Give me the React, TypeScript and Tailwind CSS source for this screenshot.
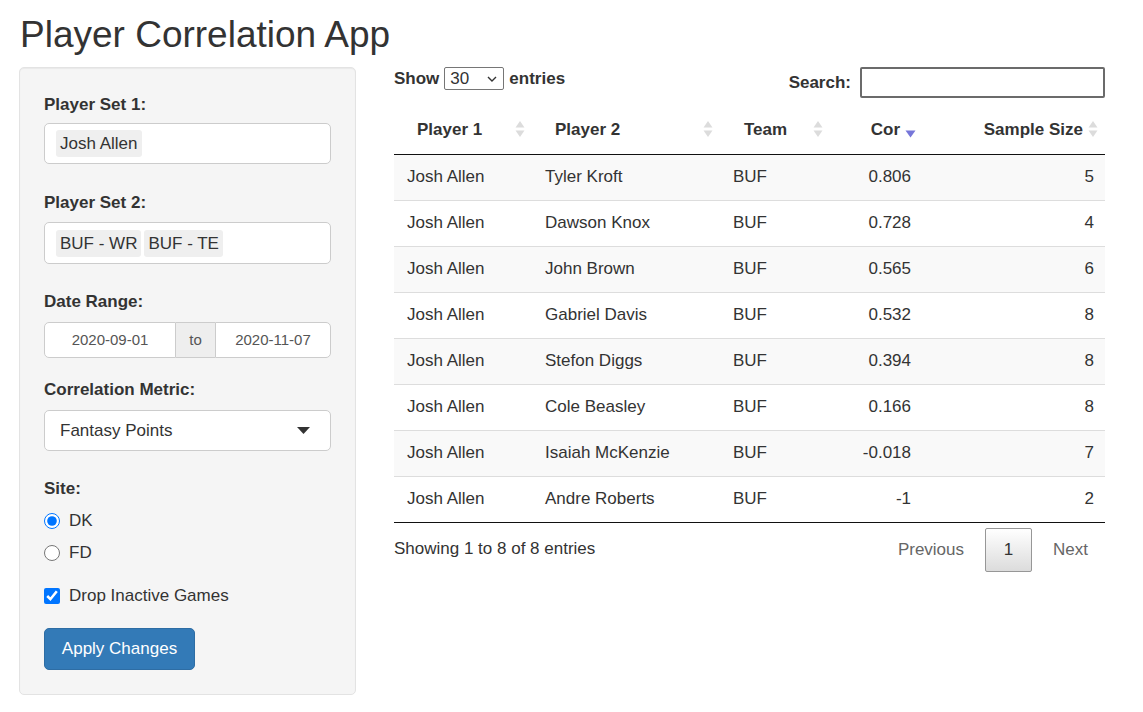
import React from 'react'

const rows = [
  { p1: 'Josh Allen', p2: 'Tyler Kroft', team: 'BUF', cor: '0.806', n: 5 },
  { p1: 'Josh Allen', p2: 'Dawson Knox', team: 'BUF', cor: '0.728', n: 4 },
  { p1: 'Josh Allen', p2: 'John Brown', team: 'BUF', cor: '0.565', n: 6 },
  { p1: 'Josh Allen', p2: 'Gabriel Davis', team: 'BUF', cor: '0.532', n: 8 },
  { p1: 'Josh Allen', p2: 'Stefon Diggs', team: 'BUF', cor: '0.394', n: 8 },
  { p1: 'Josh Allen', p2: 'Cole Beasley', team: 'BUF', cor: '0.166', n: 8 },
  { p1: 'Josh Allen', p2: 'Isaiah McKenzie', team: 'BUF', cor: '-0.018', n: 7 },
  { p1: 'Josh Allen', p2: 'Andre Roberts', team: 'BUF', cor: '-1', n: 2 },
]

function SortBoth() {
  return (
    <svg className="absolute right-[7px] top-1/2 -translate-y-1/2" width="10" height="18" viewBox="0 0 10 18">
      <path d="M5 1 L9.5 7.5 L0.5 7.5 Z" fill="#dcdcdc" />
      <path d="M5 17 L9.5 10.5 L0.5 10.5 Z" fill="#dcdcdc" />
    </svg>
  )
}

function SortDesc() {
  return (
    <svg className="absolute right-[7px] top-[25px]" width="11" height="8" viewBox="0 0 11 8">
      <path d="M5.5 7.5 L10.5 0.5 L0.5 0.5 Z" fill="#7676d9" />
    </svg>
  )
}

function Label({ children }: { children: React.ReactNode }) {
  return <div className="h-[24px] leading-[24px] font-bold text-[17px] text-[#333]">{children}</div>
}

function Chip({ children }: { children: React.ReactNode }) {
  return <span className="bg-[#efefef] rounded-[3px] px-[4px] h-[27px] leading-[27px] inline-block">{children}</span>
}

export default function App() {
  return (
    <div className="w-[1143px] h-[712px] bg-white text-[#333] text-[17px] font-['Liberation_Sans',Arial,sans-serif] px-[19px]">
      <h2 className="pt-[14px] h-[67px] text-[37px] leading-[41px] font-normal pl-[1px]">Player Correlation App</h2>

      <div className="flex">
        {/* Sidebar */}
        <div className="w-[337px] h-[628px] bg-[#f5f5f5] border border-[#e3e3e3] rounded-[5px] shadow-[inset_0_1px_1px_rgba(0,0,0,0.05)] px-[24px] pt-[25px]">
          <Label>Player Set 1:</Label>
          <div className="mt-[6px] h-[41px] bg-white border border-[#ccc] rounded-[5px] flex items-center pl-[11px]">
            <Chip>Josh Allen</Chip>
          </div>

          <div className="mt-[27px]">
            <Label>Player Set 2:</Label>
          </div>
          <div className="mt-[7px] h-[42px] bg-white border border-[#ccc] rounded-[5px] flex items-center gap-[3px] pl-[11px]">
            <Chip>BUF - WR</Chip>
            <Chip>BUF - TE</Chip>
          </div>

          <div className="mt-[26px]">
            <Label>Date Range:</Label>
          </div>
          <div className="mt-[8px] h-[36px] flex text-[15px] text-[#555]">
            <div className="w-[132px] bg-white border border-[#ccc] rounded-l-[5px] flex items-center justify-center">2020-09-01</div>
            <div className="w-[39px] bg-[#eee] border-y border-[#ccc] flex items-center justify-center">to</div>
            <div className="w-[116px] bg-white border border-[#ccc] rounded-r-[5px] flex items-center justify-center">2020-11-07</div>
          </div>

          <div className="mt-[20px]">
            <Label>Correlation Metric:</Label>
          </div>
          <div className="mt-[8px] h-[41px] bg-white border border-[#ccc] rounded-[5px] flex items-center justify-between pl-[15px] pr-[20px]">
            <span>Fantasy Points</span>
            <svg width="13" height="7" viewBox="0 0 13 7">
              <path d="M0 0 L13 0 L6.5 7 Z" fill="#333" />
            </svg>
          </div>

          <div className="mt-[26px]">
            <Label>Site:</Label>
          </div>
          <div className="mt-[8px] flex flex-col gap-[8px]">
            <label className="h-[24px] flex items-center gap-[9px]">
              <input type="radio" name="site" defaultChecked className="w-4 h-4 m-0 accent-[#0075ff]" />
              <span>DK</span>
            </label>
            <label className="h-[24px] flex items-center gap-[9px]">
              <input type="radio" name="site" className="w-4 h-4 m-0" />
              <span>FD</span>
            </label>
          </div>

          <label className="mt-[19px] h-[24px] flex items-center gap-[9px]">
            <input type="checkbox" defaultChecked className="w-4 h-4 m-0 accent-[#0075ff]" />
            <span>Drop Inactive Games</span>
          </label>

          <button className="mt-[20px] w-[151px] h-[42px] bg-[#337ab7] border border-[#2e6da4] rounded-[5px] text-white text-[17px]">
            Apply Changes
          </button>
        </div>

        {/* Main */}
        <div className="ml-[38px] w-[711px]">
          <div className="flex justify-between items-start">
            <div className="flex items-center h-[23px] font-bold">
              <span>Show</span>
              <div className="ml-[5px] w-[60px] h-[23px] border border-[#767676] rounded-[2px] flex items-center justify-between pl-[5px] pr-[6px] font-normal">
                <span>30</span>
                <svg width="10" height="6" viewBox="0 0 10 6">
                  <path d="M1 1 L5 5 L9 1" fill="none" stroke="#333" strokeWidth="1.4" />
                </svg>
              </div>
              <span className="ml-[5px]">entries</span>
            </div>
            <div className="flex items-center font-bold">
              <span>Search:</span>
              <div className="ml-[9px] w-[245px] h-[31px] border-2 border-[#6b6b6b] rounded-[2px] bg-white" />
            </div>
          </div>

          <table className="mt-[7px] w-[711px] table-fixed border-collapse">
            <colgroup>
              <col className="w-[138px]" />
              <col className="w-[188px]" />
              <col className="w-[110px]" />
              <col className="w-[93px]" />
              <col className="w-[182px]" />
            </colgroup>
            <thead>
              <tr className="border-b border-[#111]">
                <th className="relative h-[49px] pl-[23px] text-left font-bold p-0">Player 1<SortBoth /></th>
                <th className="relative h-[49px] pl-[23px] text-left font-bold p-0">Player 2<SortBoth /></th>
                <th className="relative h-[49px] pl-[24px] text-left font-bold p-0">Team<SortBoth /></th>
                <th className="relative h-[49px] pr-[23px] text-right font-bold p-0">Cor<SortDesc /></th>
                <th className="relative h-[49px] pr-[22px] text-right font-bold p-0">Sample Size<SortBoth /></th>
              </tr>
            </thead>
            <tbody>
              {rows.map((r, i) => (
                <tr
                  key={r.p2}
                  className={`${i % 2 === 0 ? 'bg-[#f9f9f9]' : 'bg-white'} ${i === rows.length - 1 ? 'border-b border-[#111]' : 'border-b border-[#ddd]'}`}
                >
                  <td className="h-[46px] pl-[13px] p-0">{r.p1}</td>
                  <td className="h-[46px] pl-[13px] p-0">{r.p2}</td>
                  <td className="h-[46px] pl-[13px] p-0">{r.team}</td>
                  <td className="h-[46px] pr-[12px] p-0 text-right">{r.cor}</td>
                  <td className="h-[46px] pr-[11px] p-0 text-right">{r.n}</td>
                </tr>
              ))}
            </tbody>
          </table>

          <div className="flex justify-between items-start">
            <div className="mt-[14px] leading-[24px]">Showing 1 to 8 of 8 entries</div>
            <div className="mt-[5px] flex items-center">
              <span className="text-[#666] mr-[21px]">Previous</span>
              <div className="w-[47px] h-[44px] border border-[#979797] rounded-[2px] bg-gradient-to-b from-white to-[#dcdcdc] flex items-center justify-center">
                1
              </div>
              <span className="text-[#666] ml-[21px] mr-[17px]">Next</span>
            </div>
          </div>
        </div>
      </div>
    </div>
  )
}
